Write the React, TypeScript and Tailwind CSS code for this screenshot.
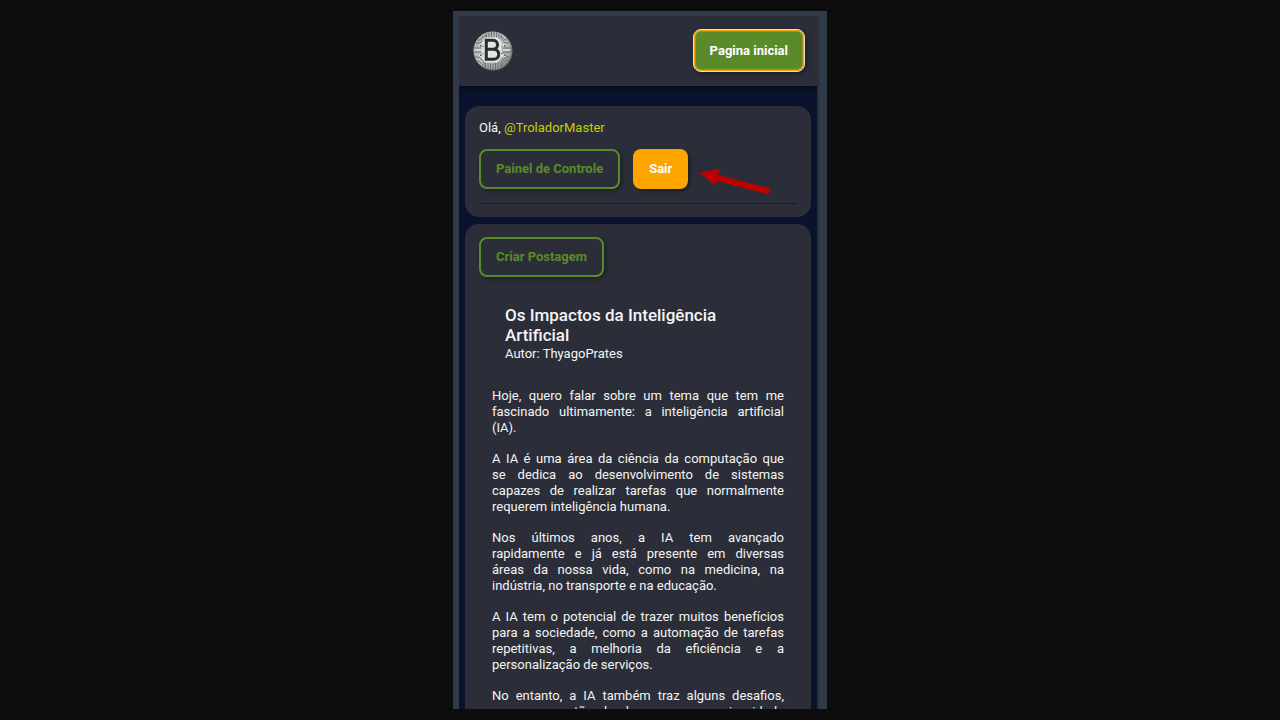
const paragraphs = [
  "Hoje, quero falar sobre um tema que tem me fascinado ultimamente: a inteligência artificial (IA).",
  "A IA é uma área da ciência da computação que se\u00a0dedica ao desenvolvimento de sistemas capazes de realizar tarefas que normalmente requerem inteligência humana.",
  "Nos últimos anos, a IA tem avançado rapidamente\u00a0e já está presente em diversas áreas\u00a0da nossa vida, como na medicina, na indústria,\u00a0no transporte e na educação.",
  "A IA tem o potencial de trazer muitos benefícios para a sociedade, como a automação de tarefas repetitivas, a melhoria da eficiência e a personalização de serviços.",
  "No entanto, a IA também traz alguns desafios, como a questão do desemprego, a privacidade e\u00a0a\u00a0segurança dos dados.",
];

function Logo() {
  return (
    <svg className="size-10" viewBox="0 0 40 40" role="img" aria-label="Logo">
      <defs>
        <linearGradient id="coin" x1="0" y1="0" x2="1" y2="1">
          <stop offset="0" stopColor="#a4aaa7" />
          <stop offset="0.5" stopColor="#c0c4c1" />
          <stop offset="1" stopColor="#858b89" />
        </linearGradient>
      </defs>
      <circle cx="20" cy="20" r="19.5" fill="#747b79" />
      <circle cx="19.3" cy="19.4" r="18.7" fill="url(#coin)" />
      <g fill="none" stroke="#626a69" strokeWidth="0.9">
        <path d="M13.5 2.5v5M16 1.5v5M18.5 1v5M21 1v5M23.5 1.5v5M26 2.5v5" />
        <path d="M12.5 37v-6M15 38v-6M17.5 38.5v-6M20 38.5v-6M22.5 38v-6M25 37v-6" />
        <path d="M1 17h9M1 21h9M30 17h8M30 21h8" />
        <path d="M3 12h4l5-5V4M5 9h2l4-4M2 26h4l5 5v5M4 30h2l4 4" />
        <path d="M36 12h-4l-4-5V4M34 9h-2l-4-4M37 26h-4l-5 5v5M36 29h-3l-5 6" />
      </g>
      <path d="M11.5 6.500h13l4 5v15l-4 5h-13l-3-5v-15z" fill="#e2e6e3" />
      <path d="M6 13h5v3H6zM6 23h5v3H6zM28 13h5v3h-5zM28 23h5v3h-5zM2 18h7v2H2zM30 18h7v2h-7z" fill="#d5d9d6" />
      <path d="M7 14h1.5v1.5H7zM7 23.5h1.5V25H7zM31 14h1.5v1.5H31zM31 23.5h1.5V25H31zM9.5 15h1v1h-1zM9.5 22h1v1h-1zM28.5 15h1v1h-1zM28.5 22h1v1h-1z" fill="#4b5453" />
      <path d="M13.300 9.300v19M11.700 9.300h8.300c6 0 6 9 0 9h-7h7.500c7 0 7 10 0 10h-8.800" fill="none" stroke="#253130" strokeWidth="3" />
    </svg>
  );
}

function Arrow() {
  return (
    <svg className="ml-3 mt-[18px] h-7 w-[70px]" viewBox="0 0 70 28" aria-hidden="true">
      <path d="M0 5.5 20 2l-2 6 52 13.500-1.500 6L16 13.500 15 19z" fill="#c00000" />
    </svg>
  );
}

const outline =
  "h-10 rounded-lg border-2 border-[#5b8a29] px-[15px] font-bold text-[#5b8a29] shadow-[2px_2px_4px_#0005]";

export default function App() {
  return (
    <div className="flex h-screen justify-center bg-[#0d0d0d] py-[11px] font-['Roboto',sans-serif] text-[13px] text-[#f4f4f4]">
      <div className="flex w-full max-w-[374px] flex-col overflow-hidden border-t-[5px] border-r-8 border-l-[6px] border-[#303a48] bg-[#0b122d]">
        <div className="flex min-h-0 flex-1 flex-col overflow-hidden border-r-2 border-[#292e37]">
          <header className="flex shrink-0 items-center justify-between bg-[#2b2e38] pt-[13px] pr-3 pb-3.5 pl-3.5 shadow-[0_2px_5px_#0008]">
            <Logo />
            <button className="h-[43px] rounded-lg border border-[#f3e3c4] bg-[#5b8a29] px-4 font-bold text-white shadow-[inset_0_0_0_1px_#f5a109,inset_0_0_0_2px_#a8901c,2px_2px_4px_#0005]">
              Pagina inicial
            </button>
          </header>

          <main className="flex flex-col gap-[7px] px-1.5 pt-5">
            <section className="rounded-[14px] bg-[#2b2e38] px-3.5 pt-3.5 pb-[13px]">
              <p className="leading-4">
                Olá, <a href="#perfil" className="text-[#c5d000]">@TroladorMaster</a>
              </p>
              <div className="mt-[13px] flex h-10 items-start">
                <button className={outline}>Painel de Controle</button>
                <button className="ml-[13px] h-10 rounded-lg bg-[#ffa500] px-4 font-bold text-white shadow-[2px_2px_4px_#0005]">
                  Sair
                </button>
                <Arrow />
              </div>
              <hr className="mt-3.5 border-[#171b38]" />
            </section>

            <section className="rounded-[14px] bg-[#2b2e38] px-3.5 pt-[13px] pb-6">
              <button className={outline}>Criar Postagem</button>
              <article>
                <div className="mt-7 flex flex-col gap-px px-[26px]">
                  <h1 className="text-[17px] leading-5 font-medium">Os Impactos da Inteligência Artificial</h1>
                  <p className="leading-4">Autor: ThyagoPrates</p>
                </div>
                <div className="mt-[26px] flex flex-col gap-[15px] px-[13px] text-justify leading-4">
                  {paragraphs.map((text) => (
                    <p key={text}>{text}</p>
                  ))}
                </div>
              </article>
            </section>
          </main>
        </div>
      </div>
    </div>
  );
}
